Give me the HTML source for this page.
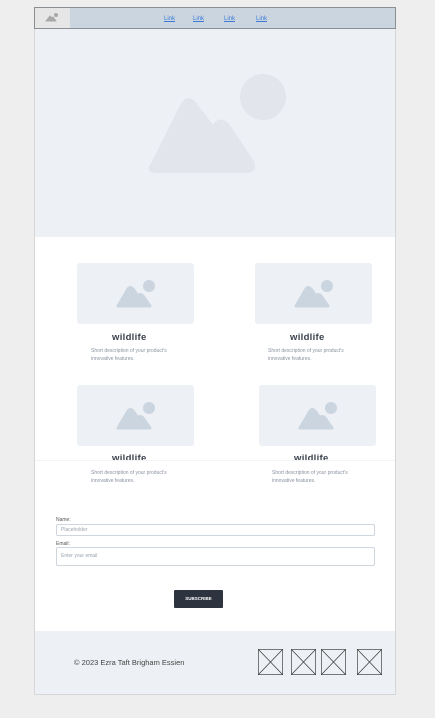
<!DOCTYPE html>
<html><head><style>
body{margin:0;background:#eeeeee;font-family:"Liberation Sans",sans-serif;width:435px;height:718px;position:relative;overflow:hidden}
.c{position:absolute;left:34px;top:7px;width:362px;height:688px;background:#fff;border:1px solid #d6d6d6;box-sizing:border-box}
.nav{position:absolute;left:34px;top:7px;width:362px;height:22px;background:#cbd5e0;border:1px solid #8a8f94;box-sizing:border-box}
.logo{position:absolute;left:0;top:0;width:35px;height:20px;background:#e6e6e6}
.nav a{position:absolute;top:8px;font-size:6px;color:#3b7bd6;text-decoration:underline}
.hero{position:absolute;left:35px;top:29px;width:360px;height:208px;background:#edf0f4}
.img{position:absolute;width:117px;height:61px;background:#edf0f4;border-radius:3px}
.t{position:absolute;font-size:9.5px;font-weight:bold;color:#3a414c;letter-spacing:.3px}
.d{position:absolute;font-size:5px;color:#8a93a0;line-height:8px}
.lab{position:absolute;left:56px;font-size:5px;color:#555}
.in{position:absolute;left:56px;width:319px;border:1px solid #cfd6de;border-radius:2px;box-sizing:border-box;font-size:5px;color:#9aa3ad;padding-left:4px}
.btn{position:absolute;left:174px;top:590px;width:49px;height:18px;background:#2d3440;color:#fff;font-size:4.5px;font-weight:bold;text-align:center;line-height:18px;border-radius:1px}
.foot{position:absolute;left:35px;top:631px;width:360px;height:63px;background:#edf0f4}
.x{position:absolute;top:649px;width:25px;height:26px}
</style></head><body>
<div class="c"></div>
<div class="nav"><div class="logo"><svg width="35" height="20" viewBox="0 0 35 20"><path d="M11 13 L15 8 L17 10 L18 9 L21 13 Z" fill="#a8a8a8" stroke="#a8a8a8" stroke-linejoin="round"/><circle cx="21" cy="7" r="2" fill="#a8a8a8"/></svg></div>
<a style="left:129px">Link</a><a style="left:158px">Link</a><a style="left:189px">Link</a><a style="left:221px">Link</a></div>
<div class="hero"><svg width="360" height="208" viewBox="35 29 360 208"><circle cx="263" cy="97" r="23" fill="#e2e6ec"/><path d="M152 166 L182 106 Q188 94 196 106 L213 128 Q220 116 228 126 L252 162 Q256 171 246 171 L158 171 Q147 171 152 166 Z" fill="#e2e6ec" stroke="#e2e6ec" stroke-width="4" stroke-linejoin="round"/></svg></div>

<div class="img" style="left:77px;top:263px"><svg width="117" height="61"><circle cx="72" cy="23" r="6" fill="#cbd5e0"/><path d="M41 43 L51 26 Q53 23 56 26 L61 33 Q63 30 66 33 L73 43 Z" fill="#cbd5e0" stroke="#cbd5e0" stroke-width="3" stroke-linejoin="round"/></svg></div>
<div class="img" style="left:255px;top:263px"><svg width="117" height="61"><circle cx="72" cy="23" r="6" fill="#cbd5e0"/><path d="M41 43 L51 26 Q53 23 56 26 L61 33 Q63 30 66 33 L73 43 Z" fill="#cbd5e0" stroke="#cbd5e0" stroke-width="3" stroke-linejoin="round"/></svg></div>
<div class="img" style="left:77px;top:385px"><svg width="117" height="61"><circle cx="72" cy="23" r="6" fill="#cbd5e0"/><path d="M41 43 L51 26 Q53 23 56 26 L61 33 Q63 30 66 33 L73 43 Z" fill="#cbd5e0" stroke="#cbd5e0" stroke-width="3" stroke-linejoin="round"/></svg></div>
<div class="img" style="left:259px;top:385px"><svg width="117" height="61"><circle cx="72" cy="23" r="6" fill="#cbd5e0"/><path d="M41 43 L51 26 Q53 23 56 26 L61 33 Q63 30 66 33 L73 43 Z" fill="#cbd5e0" stroke="#cbd5e0" stroke-width="3" stroke-linejoin="round"/></svg></div>

<div class="t" style="left:112px;top:332px">wildlife</div>
<div class="t" style="left:290px;top:332px">wildlife</div>
<div class="t" style="left:112px;top:453px">wildlife</div>
<div class="t" style="left:294px;top:453px">wildlife</div>
<div class="d" style="left:91px;top:347px">Short description of your product's<br>innovative features.</div>
<div class="d" style="left:268px;top:347px">Short description of your product's<br>innovative features.</div>
<div class="d" style="left:91px;top:469px">Short description of your product's<br>innovative features.</div>
<div class="d" style="left:272px;top:469px">Short description of your product's<br>innovative features.</div>
<div style="position:absolute;left:35px;top:460px;width:360px;height:1px;background:#f3f4f6"></div>

<div class="lab" style="top:517px">Name:</div>
<div class="in" style="top:524px;height:12px;line-height:10px">Placeholder</div>
<div class="lab" style="top:541px">Email:</div>
<div class="in" style="top:547px;height:19px;line-height:17px">Enter your email</div>
<div class="btn">SUBSCRIBE</div>

<div class="foot"></div>
<div style="position:absolute;left:74px;top:658px;font-size:7.5px;color:#444">© 2023 Ezra Taft Brigham Essien</div>
<svg class="x" style="left:258px"><rect x=".5" y=".5" width="24" height="25" fill="none" stroke="#777"/><path d="M0 0L25 26M25 0L0 26" stroke="#333" stroke-width=".7"/></svg>
<svg class="x" style="left:291px"><rect x=".5" y=".5" width="24" height="25" fill="none" stroke="#777"/><path d="M0 0L25 26M25 0L0 26" stroke="#333" stroke-width=".7"/></svg>
<svg class="x" style="left:321px"><rect x=".5" y=".5" width="24" height="25" fill="none" stroke="#777"/><path d="M0 0L25 26M25 0L0 26" stroke="#333" stroke-width=".7"/></svg>
<svg class="x" style="left:357px"><rect x=".5" y=".5" width="24" height="25" fill="none" stroke="#777"/><path d="M0 0L25 26M25 0L0 26" stroke="#333" stroke-width=".7"/></svg>
</body></html>
